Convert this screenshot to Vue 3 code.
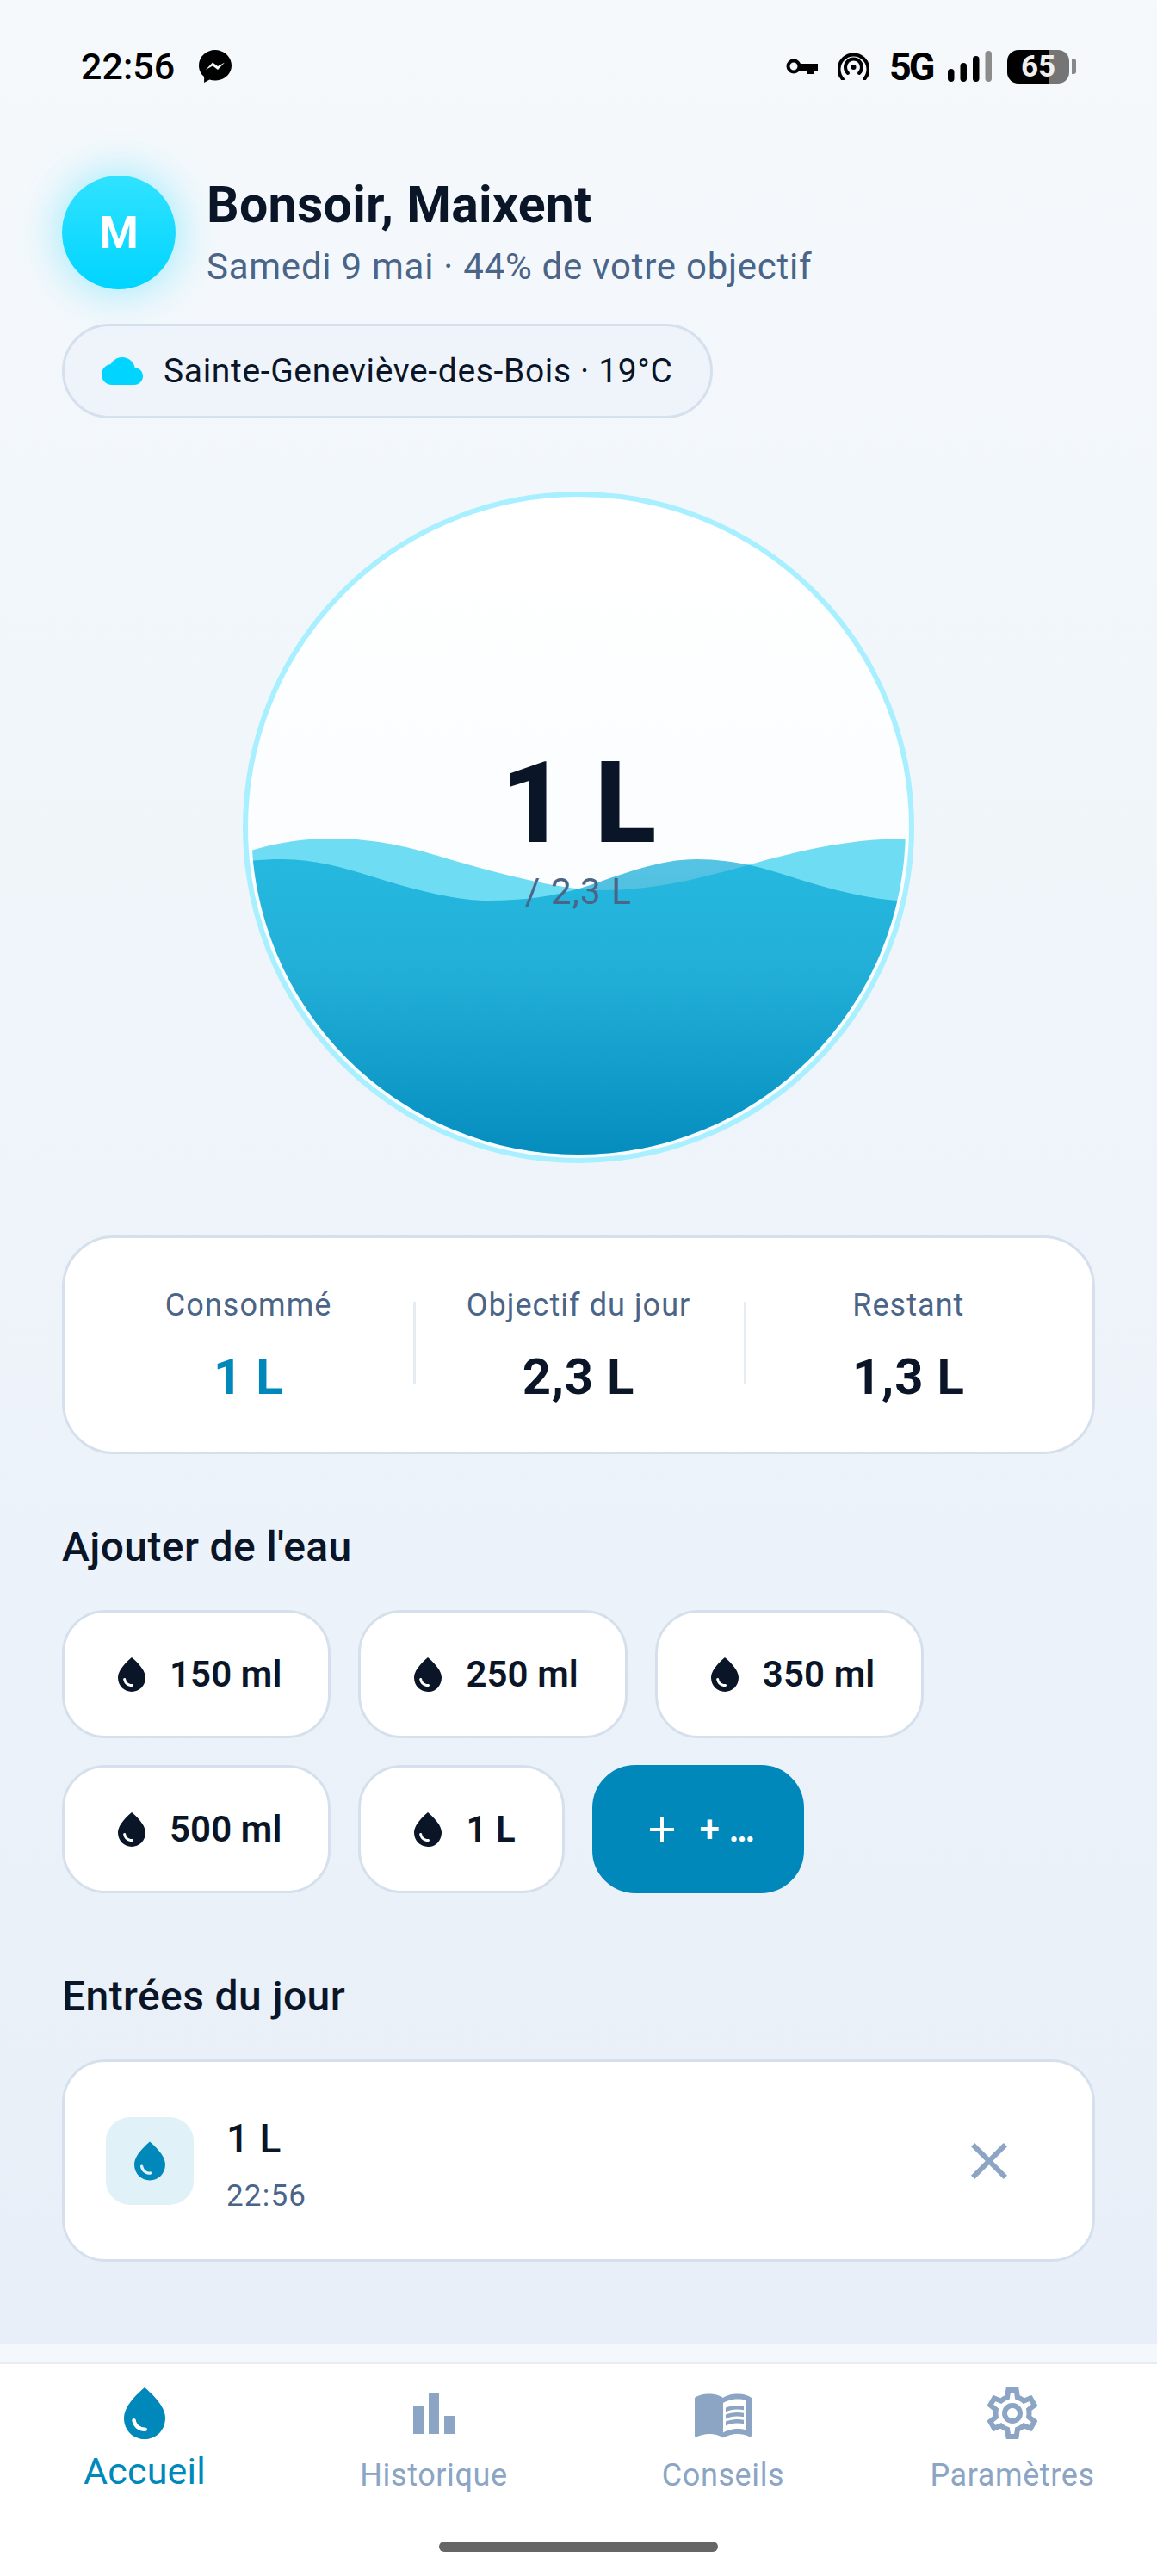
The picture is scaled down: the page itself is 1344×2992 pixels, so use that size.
<template>
  <div class="screen">
    <div class="scroll">
      <div class="status">
        <div class="status-left">
          <span class="clock">22:56</span>
          <svg class="messenger" viewBox="0 0 38 38">
            <path d="M19 0C8.5 0 0 7.9 0 18c0 5.3 2.3 9.9 6.1 13.1V38l6.300-3.500c2.100.6 4.300.9 6.600.9 10.500 0 19-7.500 19-17.400C38 7.900 29.500 0 19 0z" />
            <path class="zig" d="M8 23l8-8.500 6 4.500 8-4.500-8 8.500-6-4.500z" />
          </svg>
        </div>
        <div class="status-right">
          <svg class="key" viewBox="0 0 37 18">
            <circle cx="9" cy="9" r="6.500" fill="none" stroke="#000" stroke-width="4" />
            <path d="M15 6h22v8h-4v4h-8v-4h-10z" />
          </svg>
          <svg class="hotspot" viewBox="0 0 37 32" fill="none" stroke="#000" stroke-width="4" stroke-linecap="round">
            <path d="M6 31A17 17 0 1 1 31 31" />
            <path d="M12 24A9.500 9.500 0 1 1 25 24" />
            <circle cx="18.500" cy="17" r="3" fill="#000" stroke="none" />
          </svg>
          <span class="net">5G</span>
          <svg class="signal" viewBox="0 0 51 36">
            <rect x="0" y="21" width="7.500" height="15" rx="3.700" />
            <rect x="14.500" y="14" width="7.500" height="22" rx="3.700" />
            <rect x="29" y="6" width="7.500" height="30" rx="3.700" />
            <rect class="off" x="43.500" y="0" width="7.500" height="36" rx="3.700" />
          </svg>
          <div class="battery">
            <div class="battery-body"><span>65</span></div>
            <div class="battery-nub"></div>
          </div>
        </div>
      </div>

      <main class="content">
        <div class="greeting">
          <div class="avatar">M</div>
          <div>
            <h1>Bonsoir, Maixent</h1>
            <p>Samedi 9 mai · 44% de votre objectif</p>
          </div>
        </div>

        <div class="weather">
          <svg viewBox="0 0 24 24"><path :d="icons.cloud" /></svg>
          <span>Sainte-Geneviève-des-Bois · 19°C</span>
        </div>

        <div class="gauge">
          <svg class="water" viewBox="0 0 768 768">
            <defs>
              <clipPath id="gauge-clip"><circle cx="384" cy="384" r="380" /></clipPath>
              <linearGradient id="front-fill" x1="0" y1="0" x2="0" y2="1">
                <stop offset="0" stop-color="#00a6d5" stop-opacity="0.66" />
                <stop offset="0.35" stop-color="#059ecd" stop-opacity="0.72" />
                <stop offset="1" stop-color="#0088bb" stop-opacity="0.97" />
              </linearGradient>
            </defs>
            <g clip-path="url(#gauge-clip)">
              <path class="wave-back" d="M-6 414C29 402 64 397 97 397C159 397 204 412 234 421C304 441 364 457 416 457C474 457 534 441 584 427C644 410 704 397 765 397L774 397L774 774L-6 774Z" />
              <path fill="url(#front-fill)" d="M-6 424C9 422 24 421 40 421C84 421 124 435 160 446C204 459 244 469 280 469C319 469 354 464 385 455C429 441 474 421 521 421C544 421 564 424 584 428C609 434 629 441 652 448C689 459 724 467 755 469L774 470L774 774L-6 774Z" />
            </g>
          </svg>
          <div class="gauge-text">
            <div class="gauge-value">1 L</div>
            <div class="gauge-goal">/ 2,3 L</div>
          </div>
        </div>

        <div class="stats">
          <div v-for="stat in stats" :key="stat.label" class="stat">
            <div class="stat-label">{{ stat.label }}</div>
            <div class="stat-value" :class="{ accent: stat.accent }">{{ stat.value }}</div>
          </div>
        </div>

        <h2 class="add-title">Ajouter de l'eau</h2>
        <div class="chips">
          <button v-for="amount in amounts" :key="amount" class="chip">
            <svg viewBox="0 0 24 24"><path fill-rule="evenodd" :d="icons.drop" /></svg>
            <span>{{ amount }}</span>
          </button>
          <button class="chip custom">
            <svg viewBox="0 0 24 24"><path d="M19 13h-6v6h-2v-6H5v-2h6V5h2v6h6v2z" /></svg>
            <span>+ …</span>
          </button>
        </div>

        <h2 class="entries-title">Entrées du jour</h2>
        <div class="entry">
          <div class="entry-icon">
            <svg viewBox="0 0 24 24"><path fill-rule="evenodd" :d="icons.drop" /></svg>
          </div>
          <div class="entry-text">
            <div class="entry-amount">1 L</div>
            <div class="entry-time">22:56</div>
          </div>
          <svg class="entry-remove" viewBox="0 0 24 24">
            <path d="M19 6.410 17.590 5 12 10.590 6.410 5 5 6.410 10.590 12 5 17.590 6.410 19 12 13.410 17.590 19 19 17.590 13.410 12z" />
          </svg>
        </div>
      </main>
    </div>

    <nav class="nav">
      <div v-for="tab in tabs" :key="tab.label" class="tab" :class="{ active: tab.active }">
        <svg viewBox="0 0 24 24">
          <path v-for="d in tab.paths" :key="d" fill-rule="evenodd" :d="d" />
        </svg>
        <span>{{ tab.label }}</span>
      </div>
    </nav>
    <div class="home-bar"><div></div></div>
  </div>
</template>

<script setup>
const icons = {
  drop: 'M12 2c-5.330 4.550-8 8.480-8 11.800 0 4.980 3.800 8.200 8 8.200s8-3.220 8-8.200C20 10.480 17.330 6.550 12 2zM7.830 14c.37 0 .67.26.74.62.41 2.220 2.280 2.980 3.640 2.870.43-.02.79.32.79.75 0 .4-.32.73-.72.75-2.130.13-4.620-1.090-5.190-4.120C7.010 14.420 7.370 14 7.830 14z',
  cloud: 'M19.350 10.040C18.670 6.590 15.640 4 12 4 9.110 4 6.600 5.640 5.350 8.040 2.340 8.360 0 10.910 0 14c0 3.310 2.690 6 6 6h13c2.760 0 5-2.240 5-5 0-2.640-2.050-4.780-4.650-4.960z',
}

const stats = [
  { label: 'Consommé', value: '1 L', accent: true },
  { label: 'Objectif du jour', value: '2,3 L' },
  { label: 'Restant', value: '1,3 L' },
]

const amounts = ['150 ml', '250 ml', '350 ml', '500 ml', '1 L']

const tabs = [
  { label: 'Accueil', active: true, paths: [icons.drop] },
  { label: 'Historique', paths: ['M4 9h4v11H4zm12 4h4v7h-4zm-6-9h4v16h-4z'] },
  {
    label: 'Conseils',
    paths: [
      'M21 5c-1.110-.35-2.330-.5-3.500-.5-1.950 0-4.050.4-5.500 1.500-1.450-1.100-3.550-1.500-5.500-1.500S2.450 4.900 1 6v14.650c0 .25.25.5.5.5.1 0 .15-.05.25-.05C3.100 20.450 5.050 20 6.500 20c1.950 0 4.050.4 5.500 1.500 1.350-.85 3.800-1.500 5.500-1.500 1.650 0 3.350.3 4.750 1.050.1.05.15.05.25.05.25 0 .5-.25.5-.5V6c-.6-.45-1.250-.75-2-1zM21 18.500c-1.100-.35-2.300-.5-3.500-.5-1.700 0-4.150.65-5.500 1.500V8c1.350-.85 3.800-1.500 5.500-1.500 1.200 0 2.400.15 3.500.5v11.500z',
      'M17.500 10.500c.88 0 1.730.09 2.500.26V9.240C19.210 9.090 18.360 9 17.500 9c-1.700 0-3.240.29-4.500.83v1.660c1.130-.64 2.700-.99 4.500-.99z',
      'M13 12.490v1.660c1.130-.64 2.700-.99 4.500-.99.88 0 1.730.09 2.500.26V11.900c-.79-.15-1.640-.24-2.500-.24-1.700 0-3.240.3-4.500.83z',
      'M17.500 14.330c-1.700 0-3.240.29-4.500.83v1.660c1.130-.64 2.700-.99 4.500-.99.88 0 1.730.09 2.500.26v-1.520c-.79-.16-1.640-.24-2.500-.24z',
    ],
  },
  {
    label: 'Paramètres',
    paths: [
      'M19.430 12.980c.04-.32.07-.64.07-.98 0-.34-.03-.66-.07-.98l2.110-1.650c.19-.15.24-.42.12-.64l-2-3.460c-.09-.16-.26-.25-.44-.25-.06 0-.12.01-.17.03l-2.490 1c-.52-.4-1.080-.73-1.690-.98l-.38-2.650C14.460 2.180 14.250 2 14 2h-4c-.25 0-.46.18-.49.42l-.38 2.650c-.61.25-1.170.59-1.690.98l-2.490-1c-.06-.02-.12-.03-.18-.03-.17 0-.34.09-.43.25l-2 3.460c-.13.22-.07.49.12.64l2.110 1.650c-.04.32-.07.65-.07.98 0 .33.03.66.07.98l-2.110 1.650c-.19.15-.24.42-.12.64l2 3.460c.09.16.26.25.44.25.06 0 .12-.01.17-.03l2.490-1c.52.4 1.080.73 1.690.98l.38 2.650c.03.24.24.42.49.42h4c.25 0 .46-.18.49-.42l.38-2.650c.61-.25 1.170-.59 1.690-.98l2.490 1c.06.02.12.03.18.03.17 0 .34-.09.43-.25l2-3.460c.12-.22.07-.49-.12-.64l-2.110-1.650zm-1.980-1.710c.04.31.05.52.05.73 0 .21-.02.43-.05.73l-.14 1.130.89.7 1.080.84-.7 1.210-1.270-.51-1.040-.42-.9.68c-.43.32-.84.56-1.250.73l-1.060.43-.16 1.130-.2 1.350h-1.400l-.19-1.350-.16-1.130-1.060-.43c-.43-.18-.83-.41-1.230-.71l-.91-.7-1.060.43-1.270.51-.7-1.210 1.080-.84.89-.7-.14-1.130c-.03-.31-.05-.54-.05-.74s.02-.43.05-.73l.14-1.130-.89-.7-1.080-.84.7-1.210 1.270.51 1.040.42.9-.68c.43-.32.84-.56 1.250-.73l1.060-.43.16-1.130.2-1.350h1.390l.19 1.350.16 1.130 1.060.43c.43.18.83.41 1.230.71l.91.7 1.060-.43 1.270-.51.7 1.210-1.070.85-.89.7.14 1.130zM12 8c-2.210 0-4 1.790-4 4s1.790 4 4 4 4-1.790 4-4-1.790-4-4-4zm0 6c-1.100 0-2-.9-2-2s.9-2 2-2 2 .9 2 2-.9 2-2 2z',
    ],
  },
]
</script>

<style>
html, body {
  margin: 0;
  background: #fff;
}
</style>

<style scoped>
.screen {
  width: 1344px;
  height: 2992px;
  display: flex;
  flex-direction: column;
  background: #f4f8fc;
  font-family: Roboto, "Noto Sans", sans-serif;
  color: #0a1628;
  overflow: hidden;
}
.scroll {
  height: 2722px;
  flex-shrink: 0;
  background: linear-gradient(180deg, #f5f9fc 0%, #e8eff8 100%);
}

/* status bar */
.status {
  height: 40px;
  padding: 57px 94px 0;
  display: flex;
  justify-content: space-between;
  align-items: center;
}
.status-left {
  display: flex;
  align-items: center;
  gap: 28px;
}
.clock {
  font-size: 43px;
  font-weight: 500;
  color: #000;
}
.messenger {
  width: 38px;
  height: 38px;
}
.zig {
  fill: #f5f9fc;
}
.status-right {
  display: flex;
  align-items: center;
}
.key {
  width: 37px;
  height: 18px;
  margin-right: 23px;
}
.hotspot {
  width: 37px;
  height: 32px;
  margin-right: 23px;
}
.net {
  font-size: 45px;
  font-weight: 700;
  color: #000;
  width: 68px;
  letter-spacing: -3px;
}
.signal {
  width: 51px;
  height: 36px;
  margin-right: 18px;
}
.signal .off {
  fill: #8c8c8c;
}
.battery {
  display: flex;
  align-items: center;
  gap: 3px;
}
.battery-body {
  width: 72px;
  height: 39px;
  border-radius: 13px;
  background: linear-gradient(90deg, #000 67%, #757575 67%);
  display: flex;
  align-items: center;
  justify-content: center;
  color: #eee;
  font-size: 35px;
  font-weight: 700;
}
.battery-nub {
  width: 5px;
  height: 18px;
  border-radius: 0 3px 3px 0;
  background: #888;
}

/* page */
.content {
  padding: 107px 72px 0;
}
.greeting {
  display: flex;
  align-items: center;
  gap: 36px;
}
.avatar {
  width: 132px;
  height: 132px;
  border-radius: 50%;
  background: linear-gradient(180deg, #30e2ff, #00d4ff);
  box-shadow: 0 0 52px rgba(0, 212, 255, 0.42);
  display: flex;
  align-items: center;
  justify-content: center;
  color: #fff;
  font-size: 52px;
  font-weight: 700;
}
h1 {
  margin: -2px 0 14px;
  font-size: 59px;
  line-height: 68px;
  font-weight: 700;
  letter-spacing: 0.3px;
}
.greeting p {
  margin: 0;
  font-size: 42px;
  line-height: 48px;
  color: #4a6588;
  letter-spacing: 0.75px;
}
.weather {
  width: fit-content;
  height: 104px;
  margin-top: 40px;
  padding: 0 43px;
  display: flex;
  align-items: center;
  gap: 24px;
  border: 3px solid #d5e0ec;
  border-radius: 60px;
  background: #eff4fb;
  font-size: 39px;
  letter-spacing: 0.65px;
}
.weather svg {
  width: 48px;
  height: 48px;
  fill: #00d4ff;
}
.gauge {
  position: relative;
  width: 768px;
  height: 768px;
  margin: 85px auto 0;
  border: 6px solid #a8f0ff;
  border-radius: 50%;
  background: linear-gradient(180deg, #fff, #f8fbfe);
}
.water {
  position: absolute;
  inset: 0;
  width: 768px;
  height: 768px;
}
.wave-back {
  fill: #00c2e8;
  fill-opacity: 0.56;
}
.gauge-text {
  position: absolute;
  inset: 0;
  text-align: center;
}
.gauge-value {
  margin-top: 296px;
  font-size: 132px;
  line-height: 120px;
  font-weight: 800;
}
.gauge-goal {
  margin-top: 18px;
  font-size: 42px;
  line-height: 50px;
  color: #4a6588;
  letter-spacing: 1.1px;
}

.stats {
  height: 248px;
  margin-top: 84px;
  padding: 0 22px;
  display: grid;
  grid-template-columns: repeat(3, 1fr);
  align-items: center;
  border: 3px solid #d5e0ec;
  border-radius: 60px;
  background: #fff;
}
.stat {
  position: relative;
  padding-top: 3px;
  text-align: center;
}
.stat + .stat::before {
  content: "";
  position: absolute;
  left: 0;
  top: 20px;
  width: 3px;
  height: 95px;
  background: #e6ecf3;
}
.stat-label {
  font-size: 36px;
  line-height: 42px;
  color: #4a6588;
  letter-spacing: 1.05px;
}
.stat-value {
  margin-top: 29px;
  font-size: 58px;
  line-height: 66px;
  font-weight: 700;
  letter-spacing: 0.8px;
}
.accent {
  color: #0088bb;
}

h2 {
  margin: 0;
  font-size: 48px;
  line-height: 56px;
  font-weight: 500;
  letter-spacing: 0.4px;
}
.add-title {
  margin-top: 80px;
}
.chips {
  margin-top: 45px;
  display: flex;
  flex-wrap: wrap;
  gap: 31px 32px;
}
.chip {
  height: 149px;
  padding: 0 54px;
  display: flex;
  align-items: center;
  gap: 20px;
  border: 3px solid #d5e0ec;
  border-radius: 50px;
  background: #fff;
  color: #0a1628;
  font-family: inherit;
  font-size: 42px;
  font-weight: 600;
  letter-spacing: 0.1px;
}
.chip svg {
  width: 48px;
  height: 48px;
  fill: currentColor;
}
.chip.custom {
  border-color: #0088bb;
  background: #0088bb;
  color: #fff;
}
.entries-title {
  margin-top: 92px;
}
.entry {
  height: 229px;
  margin-top: 45px;
  padding: 0 48px;
  display: flex;
  align-items: center;
  gap: 38px;
  border: 3px solid #d5e0ec;
  border-radius: 50px;
  background: #fff;
}
.entry-icon {
  width: 102px;
  height: 102px;
  border-radius: 28px;
  background: #e0f1f7;
  display: flex;
  align-items: center;
  justify-content: center;
}
.entry-icon svg {
  width: 54px;
  height: 54px;
  fill: #0088bb;
}
.entry-text {
  flex: 1;
  padding-top: 8px;
}
.entry-amount {
  font-size: 46px;
  line-height: 54px;
  font-weight: 500;
  letter-spacing: 0.5px;
}
.entry-time {
  margin-top: 20px;
  font-size: 35px;
  line-height: 40px;
  color: #4a6588;
  letter-spacing: 1.2px;
}
.entry-remove {
  width: 72px;
  height: 72px;
  margin-right: 36px;
  fill: #8ca5c4;
}

/* bottom navigation */
.nav {
  margin-top: 21px;
  height: 186px;
  display: grid;
  grid-template-columns: repeat(4, 1fr);
  border-top: 3px solid #e5ecf3;
  background: #fff;
}
.tab {
  padding-top: 21px;
  display: flex;
  flex-direction: column;
  align-items: center;
  color: #8ca5c4;
  font-size: 36px;
  line-height: 42px;
  letter-spacing: 0.6px;
}
.tab svg {
  width: 72px;
  height: 72px;
  fill: currentColor;
}
.tab span {
  margin-top: 15px;
}
.tab.active {
  color: #0088bb;
  font-size: 43px;
  letter-spacing: 0.2px;
}
.tab.active span {
  margin-top: 10px;
}
.home-bar {
  flex: 1;
  background: #fff;
  display: flex;
  justify-content: center;
}
.home-bar div {
  width: 324px;
  height: 12px;
  margin-top: 20px;
  border-radius: 6px;
  background: #666;
}
</style>
